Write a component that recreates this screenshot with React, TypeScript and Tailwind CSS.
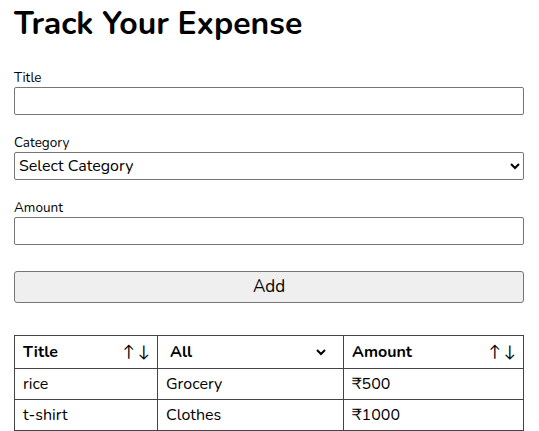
import { useState } from 'react'

interface Expense {
  id: number
  title: string
  category: string
  amount: number
}

const initialExpenses: Expense[] = [
  { id: 1, title: 'rice', category: 'Grocery', amount: 500 },
  { id: 2, title: 't-shirt', category: 'Clothes', amount: 1000 },
]

const font = { fontFamily: 'Nunito, Lato, "Noto Sans", sans-serif' }

function SortArrows() {
  return (
    <span className="flex items-center gap-[3px] text-[16px] font-normal leading-none">
      <span>↑</span>
      <span>↓</span>
    </span>
  )
}

export default function App() {
  const [expenses] = useState<Expense[]>(initialExpenses)

  return (
    <div className="bg-white text-black pl-[14px] pr-[15px] pt-[2px] w-[539px] h-[431px] overflow-hidden" style={font}>
      <h1 className="text-[32px] font-bold leading-[44px] mb-[24px]">Track Your Expense</h1>

      <form className="flex flex-col" onSubmit={(e) => e.preventDefault()}>
        <div className="flex flex-col mb-[20px]">
          <label className="text-[13.5px] leading-[16px] mb-[1px]">Title</label>
          <input className="h-[28px] w-full border border-[#767676] rounded-[2px] px-1 text-[16px]" />
        </div>

        <div className="flex flex-col mb-[20px]">
          <label className="text-[13.5px] leading-[16px] mb-[1px]">Category</label>
          <select
            className="h-[28px] w-full border border-[#767676] rounded-[2px] pl-0 text-[16px] bg-white"
            style={font}
            defaultValue=""
          >
            <option value="" hidden>
              Select Category
            </option>
            <option value="Grocery">Grocery</option>
            <option value="Clothes">Clothes</option>
            <option value="Bills">Bills</option>
            <option value="Education">Education</option>
            <option value="Medicine">Medicine</option>
          </select>
        </div>

        <div className="flex flex-col mb-[26px]">
          <label className="text-[13.5px] leading-[16px] mb-[1px]">Amount</label>
          <input className="h-[28px] w-full border border-[#767676] rounded-[2px] px-1 text-[16px]" />
        </div>

        <button
          type="submit"
          className="h-[32px] w-full bg-[#efefef] border border-[#767676] rounded-[3px] text-[17px]"
        >
          Add
        </button>
      </form>

      <table className="mt-[32px] w-[510px] border-collapse text-[16px]">
        <thead>
          <tr className="h-[33px]">
            <th className="w-[143px] border border-[#444] pl-[8px] pr-[7px] text-left font-bold">
              <div className="flex items-center justify-between">
                <span>Title</span>
                <SortArrows />
              </div>
            </th>
            <th className="w-[186px] border border-[#444] pl-[8px] pr-[14px] text-left">
              <select
                className="w-full font-bold text-[16px] bg-white outline-none -mt-[3px]"
                style={font}
                defaultValue="All"
              >
                <option value="All">All</option>
                <option value="Grocery">Grocery</option>
                <option value="Clothes">Clothes</option>
              </select>
            </th>
            <th className="border border-[#444] pl-[8px] pr-[7px] text-left font-bold">
              <div className="flex items-center justify-between">
                <span>Amount</span>
                <SortArrows />
              </div>
            </th>
          </tr>
        </thead>
        <tbody>
          {expenses.map((item) => (
            <tr key={item.id} className="h-[31px]">
              <td className="border border-[#444] px-[8px]">{item.title}</td>
              <td className="border border-[#444] px-[8px]">{item.category}</td>
              <td className="border border-[#444] px-[8px]">₹{item.amount}</td>
            </tr>
          ))}
        </tbody>
      </table>
    </div>
  )
}
